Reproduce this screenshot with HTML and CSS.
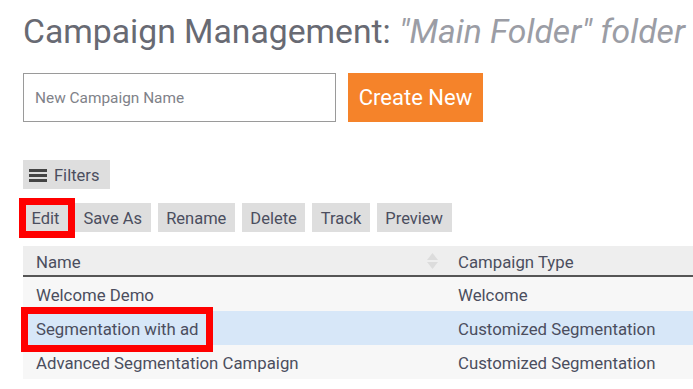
FILE: index.html
```html
<!DOCTYPE html>
<html>
<head>
<meta charset="utf-8">
<link rel="stylesheet" href="styles.css">
</head>
<body>
<div class="page">
  <h1 class="title">Campaign Management: <em class="folder">"Main Folder" folder</em></h1>
  <div class="create-row">
    <input class="name-input" type="text" placeholder="New Campaign Name">
    <button class="create-btn">Create New</button>
  </div>
  <button class="btn filters-btn">
    <svg class="burger" width="18" height="14" viewBox="0 0 18 14"><rect x="0" y="1" width="18" height="3" fill="#444"/><rect x="0" y="6" width="18" height="3" fill="#444"/><rect x="0" y="11" width="18" height="3" fill="#444"/></svg>
    Filters
  </button>
  <div class="actions">
    <button class="btn">Edit</button>
    <button class="btn">Save As</button>
    <button class="btn">Rename</button>
    <button class="btn">Delete</button>
    <button class="btn">Track</button>
    <button class="btn">Preview</button>
    <span class="mark mark-edit"></span>
  </div>
  <div class="table-wrap">
    <table class="grid">
      <colgroup><col class="c1"><col class="c2"></colgroup>
      <thead>
        <tr>
          <th class="col-name">Name<span class="sort"><svg width="11" height="16" viewBox="0 0 11 16"><path d="M5.5 0 L11 7 H0 Z" fill="#dcdcdc"/><path d="M5.5 16 L11 9 H0 Z" fill="#dcdcdc"/></svg></span></th>
          <th class="col-type">Campaign Type</th>
        </tr>
      </thead>
      <tbody>
        <tr><td>Welcome Demo</td><td>Welcome</td></tr>
        <tr class="selected"><td>Segmentation with ad</td><td>Customized Segmentation</td></tr>
        <tr><td>Advanced Segmentation Campaign</td><td>Customized Segmentation</td></tr>
      </tbody>
    </table>
    <span class="mark mark-row"></span>
  </div>
</div>
</body>
</html>
```
FILE: styles.css
```css
html, body {
  margin: 0;
  padding: 0;
  background: #fff;
  overflow: hidden;
}
body {
  font-family: Roboto, "Liberation Sans", sans-serif;
  width: 693px;
  height: 389px;
}
.page {
  padding: 10px 0 0 23px;
}
.title {
  margin: 0;
  font-size: 33.7px;
  font-weight: 400;
  color: #686a73;
  line-height: 44px;
  white-space: nowrap;
}
.folder {
  color: #9b9da5;
  font-style: italic;
}
.create-row {
  display: flex;
  gap: 12px;
  margin-top: 19px;
}
.name-input {
  box-sizing: border-box;
  width: 313px;
  height: 49px;
  border: 1px solid #9a9a9a;
  padding: 0 11px;
  font-family: inherit;
  font-size: 15.4px;
  color: #333;
  outline: none;
}
.name-input::placeholder {
  color: #7f8289;
}
.create-btn {
  width: 135px;
  height: 49px;
  border: 0;
  background: #f5832a;
  color: #fff;
  font-family: inherit;
  font-size: 22px;
  padding: 0;
}
.btn {
  border: 0;
  background: #dedede;
  color: #4b4e5e;
  font-family: inherit;
  font-size: 16.5px;
  height: 29px;
  padding: 2px 8.5px 0;
  display: inline-flex;
  align-items: center;
}
.filters-btn {
  margin-top: 38px;
  width: 87px;
  padding: 2px 6px 0;
  gap: 7px;
}
.burger {
  margin-top: -2px;
}
.actions {
  position: relative;
  display: flex;
  gap: 7px;
  margin-top: 14px;
}
.mark {
  position: absolute;
  border: 7px solid #ff0000;
  box-sizing: border-box;
  pointer-events: none;
}
.mark-edit {
  left: -4px;
  top: -5px;
  width: 56px;
  height: 40px;
}
.table-wrap {
  position: relative;
  margin-top: 14px;
}
.grid {
  border-collapse: collapse;
  table-layout: fixed;
  width: 800px;
  font-size: 16.8px;
  color: #4b4e5e;
}
.c1 {
  width: 423px;
}
.grid th,
.grid td {
  box-sizing: border-box;
}
.grid th {
  background: #eeeeee;
  font-weight: 400;
  text-align: left;
  height: 30px;
  padding: 3px 0 0;
  border-bottom: 2px solid #555;
}
.col-name {
  padding-left: 13px !important;
  position: relative;
}
.col-type, .grid td + td {
  padding-left: 12px !important;
}
.sort {
  position: absolute;
  right: 8px;
  top: 7px;
  line-height: 0;
}
.grid td {
  height: 34px;
  padding: 2px 0 0 13px;
  background: #f7f7f7;
}
.grid tbody tr:first-child td {
  height: 35px;
}
.grid tr.selected td {
  background: #d7e7f8;
}
.mark-row {
  left: -2px;
  top: 61px;
  width: 192px;
  height: 45px;
}
```
